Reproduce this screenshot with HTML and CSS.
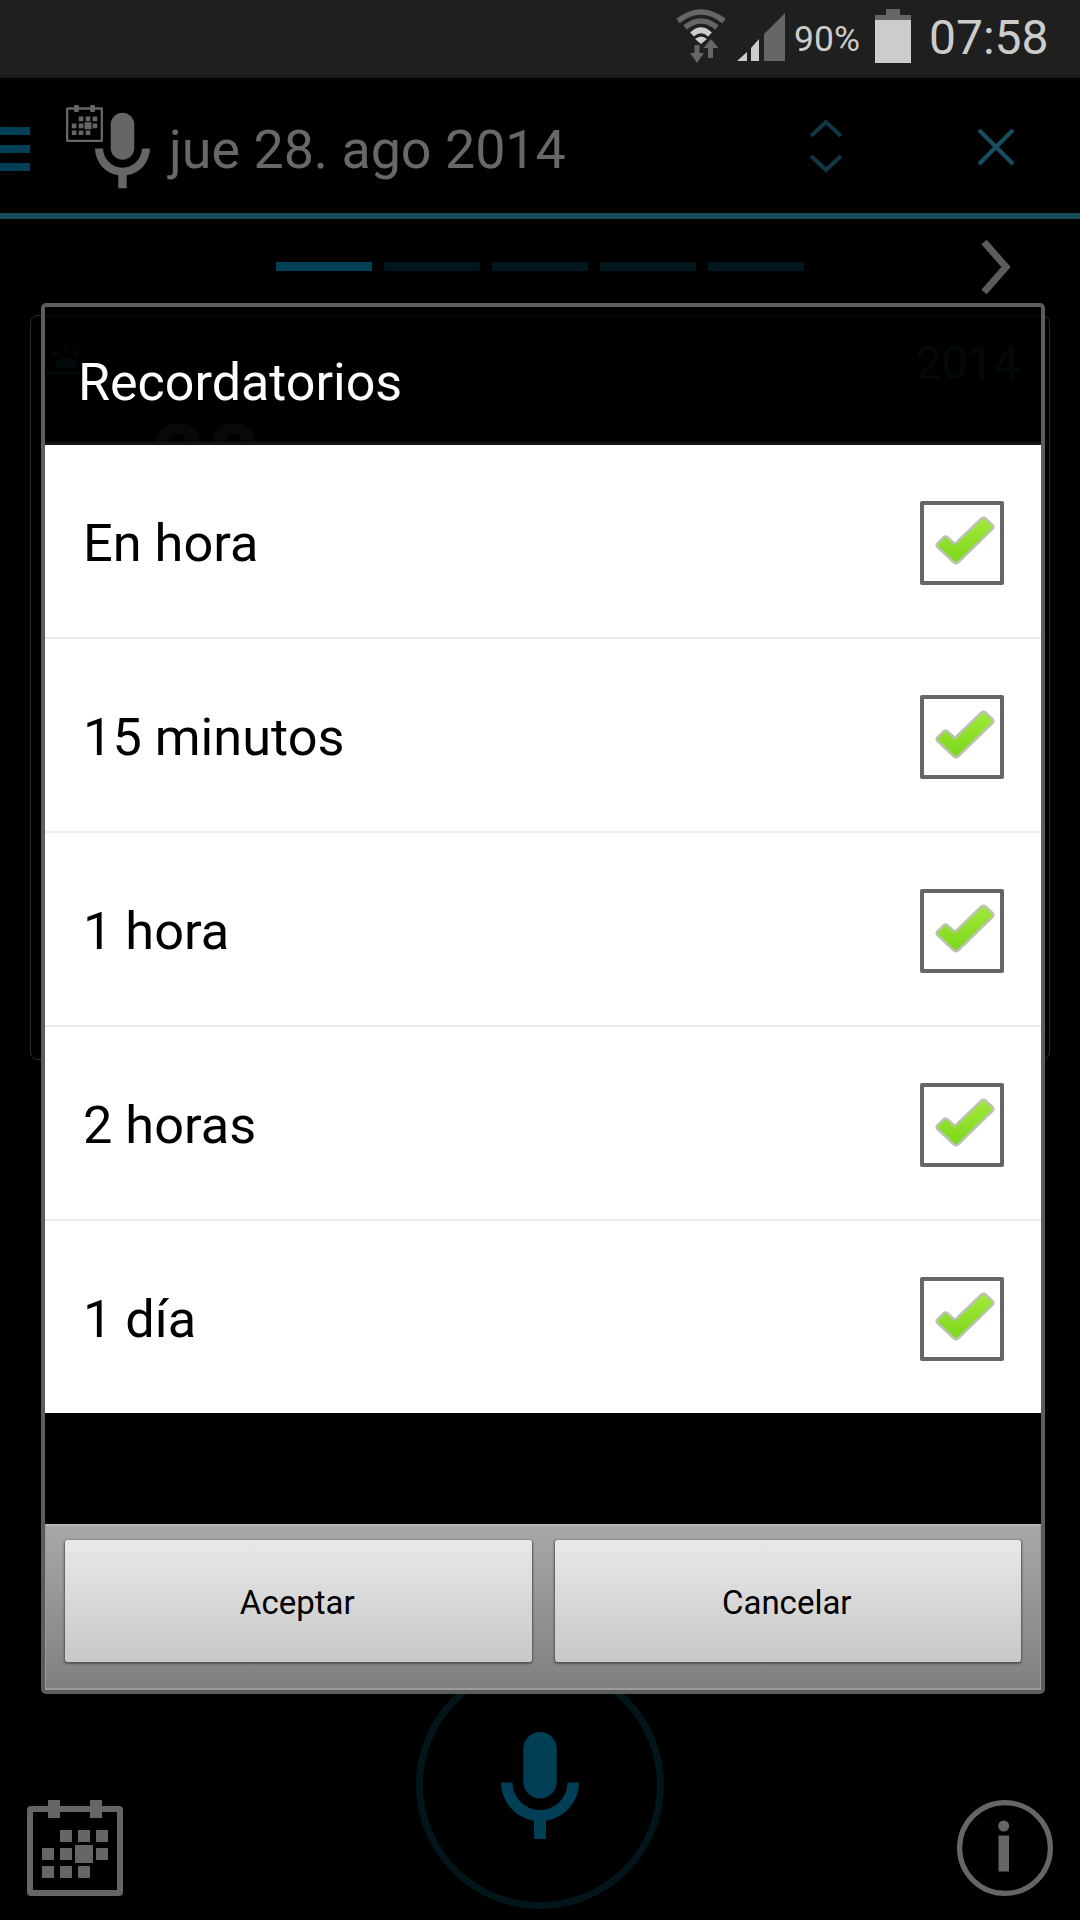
FILE: index.html
```html
<!DOCTYPE html>
<html lang="es">
<head>
    <meta charset="UTF-8">
    <meta name="viewport" content="width=device-width, initial-scale=1.0">
    <title>Recordatorios</title>
    <link rel="stylesheet" href="styles.css">
</head>
<body>
    <!-- Shared shapes -->
    <svg class="defs" width="0" height="0">
        <defs>
            <linearGradient id="check-fill" x1="0" y1="0" x2="0" y2="1">
                <stop offset="0" stop-color="#a2e83c"/>
                <stop offset="1" stop-color="#7bd818"/>
            </linearGradient>
            <symbol id="check" viewBox="0 0 76 76">
                <path d="M13 39L20 32Q21.500 31 23 32L31 39L57.500 13.500Q59.500 12 61.500 13.500L68.500 20Q70 22 68.500 24L34 57.500Q32 59 30 57.500L13 41.500Q12 40.500 13 39Z" fill="url(#check-fill)" stroke="#b9c3ae" stroke-width="2.500"/>
            </symbol>
            <symbol id="mic" viewBox="0 0 78 107">
                <rect x="22.300" y="0" width="33.400" height="66.500" rx="16.700"/>
                <path d="M0 50.500H11.500A27.500 27.500 0 0 0 66.500 50.500H78A39 39 0 0 1 45 88.700V107H33V88.700A39 39 0 0 1 0 50.500Z"/>
            </symbol>
            <symbol id="calendar" viewBox="0 0 96 96">
                <rect x="3" y="9" width="90" height="84" rx="1" fill="none" stroke="currentColor" stroke-width="6"/>
                <path d="M21 0h12v18H21zM63 0h12v18H63zM33 30h12v12H33zM51 30h12v12H51zM69 30h12v12H69zM15 48h12v12H15zM33 48h12v12H33zM48 45h18v18H48zM69 48h12v12H69zM15 66h12v12H15zM33 66h12v12H33zM51 66h12v12H51z"/>
            </symbol>
        </defs>
    </svg>

    <div class="screen">
        <div class="status-bar">
            <svg class="wifi" width="50" height="56" viewBox="0 0 50 56">
                <g fill="none" stroke-width="5.500">
                    <path d="M2 12Q25 -6 48 12" stroke="#666"/>
                    <path d="M9 18.500Q25 5.500 41 18.500" stroke="#666"/>
                    <path d="M16 25.500Q25 17 34 25.500" stroke="#ccc"/>
                </g>
                <path d="M19 30Q25 25 31 30L25 35Z" fill="#ccc"/>
                <path d="M18.500 36h5v8h4.500L21 54l-7-10h4.500zM32 49h5V39h5.500L35 30l-7.500 9H32z" fill="#666"/>
            </svg>
            <svg class="signal" width="48" height="48" viewBox="0 0 48 48">
                <path d="M0 48L10 39V48ZM14 48V35L22 26V48Z" fill="#ccc"/>
                <path d="M27 48V21L48 0V48Z" fill="#666"/>
            </svg>
            <span class="percent">90%</span>
            <svg class="battery" width="36" height="54" viewBox="0 0 36 54">
                <path d="M11 0H25V6H36V12H0V6H11Z" fill="#666"/>
                <path d="M0 11H36V54H0Z" fill="#ccc"/>
            </svg>
            <span class="clock">07:58</span>
        </div>

        <div class="app-bar">
            <div class="menu"><i></i><i></i><i></i></div>
            <div class="app-icon">
                <svg class="app-calendar"><use href="#calendar"/></svg>
                <svg class="app-mic"><use href="#mic"/></svg>
            </div>
            <h1 class="date">jue 28. ago 2014</h1>
            <svg class="sort" width="34" height="54" viewBox="0 0 34 54">
                <path d="M2 17L17 3L32 17M2 37L17 51L32 37"/>
            </svg>
            <svg class="close" width="38" height="38" viewBox="0 0 38 38">
                <path d="M2 2L36 36M36 2L2 36"/>
            </svg>
        </div>

        <div class="pager">
            <span class="page active"></span>
            <span class="page"></span>
            <span class="page"></span>
            <span class="page"></span>
            <span class="page"></span>
            <svg class="next" width="30" height="54" viewBox="0 0 30 54">
                <path d="M3 2L25 27L3 52"/>
            </svg>
        </div>

        <div class="card">
            <div class="card-top">
                <svg width="38" height="30" viewBox="0 0 38 30">
                    <path d="M0 26h38v3H0zM8 22a11 11 0 0 1 22 0zM18 0h2v6h-2zM5 6l2-2 4 4-2 2zM33 6l-2-2-4 4 2 2z"/>
                </svg>
                <span class="card-year">2014</span>
            </div>
            <div class="card-day">28</div>
        </div>

        <div class="bottom-bar">
            <svg class="calendar-button" width="96" height="96"><use href="#calendar"/></svg>
            <div class="mic-button">
                <svg width="78" height="107"><use href="#mic"/></svg>
            </div>
            <svg class="info" width="96" height="96" viewBox="0 0 96 96">
                <circle cx="48" cy="48" r="45.400" fill="none" stroke="#666" stroke-width="5.200"/>
                <circle cx="46.700" cy="26" r="5.500"/>
                <path d="M41.500 35.500h10.500v36H41.500z"/>
            </svg>
        </div>
    </div>

    <!-- Dialog -->
    <div class="dialog">
        <h2 class="dialog-title">Recordatorios</h2>
        <ul class="options">
            <li class="option">En hora<span class="checkbox"><svg><use href="#check"/></svg></span></li>
            <li class="option">15 minutos<span class="checkbox"><svg><use href="#check"/></svg></span></li>
            <li class="option">1 hora<span class="checkbox"><svg><use href="#check"/></svg></span></li>
            <li class="option">2 horas<span class="checkbox"><svg><use href="#check"/></svg></span></li>
            <li class="option">1 día<span class="checkbox"><svg><use href="#check"/></svg></span></li>
        </ul>
        <div class="dialog-buttons">
            <button class="button">Aceptar</button>
            <button class="button">Cancelar</button>
        </div>
    </div>
</body>
</html>
```

FILE: styles.css
```css
* {
    box-sizing: border-box;
}
body {
    font-family: Roboto, sans-serif;
    margin: 0;
    background-color: #000;
    color: #686868;
}
svg {
    display: block;
    flex: none;
    fill: currentColor;
}
.defs {
    position: absolute;
}
.screen {
    width: 1080px;
    height: 1920px;
    overflow: hidden;
    display: flex;
    flex-direction: column;
}

/* Status bar */
.status-bar {
    height: 78px;
    flex: none;
    display: flex;
    align-items: flex-start;
    padding: 9px 0 0 676px;
    background-color: #1f1f1f;
    border-bottom: 3px solid #191919;
    color: #ccc;
    line-height: 54px;
    white-space: nowrap;
}
.signal {
    margin: 4px 9px 0 11px;
}
.percent {
    width: 81px;
    font-size: 35.5px;
    line-height: 61px;
}
.clock {
    margin-left: 18px;
    font-size: 48px;
    line-height: 57px;
}

/* App bar */
.app-bar {
    height: 141px;
    flex: none;
    display: flex;
    align-items: flex-start;
    border-bottom: 6px solid #164a5a;
}
.menu {
    width: 30px;
    display: grid;
    gap: 10px;
    margin: 49px 36px 0 0;
}
.menu i {
    height: 8px;
    background-color: #003f55;
}
.app-icon {
    display: flex;
    width: 84px;
    margin-top: 27px;
    color: #666;
}
.app-calendar {
    width: 37px;
    height: 37px;
}
.app-mic {
    width: 55px;
    height: 77px;
    margin: 7px 0 0 -8px;
}
.date {
    width: 659px;
    margin: 40px 0 0 19px;
    font-size: 53.8px;
    font-weight: 400;
    line-height: 64px;
    color: #686868;
}
.sort {
    margin: 41px 0 0 -19px;
    fill: none;
    stroke: #103743;
    stroke-width: 4;
}
.close {
    margin: 50px 0 0 134px;
    fill: none;
    stroke: #184f62;
    stroke-width: 4;
}

/* Pager */
.pager {
    height: 96px;
    flex: none;
    display: flex;
    align-items: center;
    gap: 12px;
    padding: 0 0 1px 276px;
}
.page {
    width: 96px;
    height: 9px;
    background-color: #01151c;
}
.page.active {
    background-color: #004058;
}
.next {
    margin-left: 165px;
    fill: none;
    stroke: #5c5c5c;
    stroke-width: 7;
}

/* Day card */
.card {
    height: 745px;
    flex: none;
    width: 1020px;
    margin-left: 30px;
    padding: 19px 30px 0 16px;
    border: 1px solid #2b2b2b;
    border-radius: 8px;
}
.card-top {
    display: flex;
    justify-content: space-between;
    color: #0b2f38;
}
.card-top svg {
    margin-top: 11px;
}
.card-year {
    font-size: 46px;
    line-height: 56px;
}
.card-day {
    margin: 15px 0 0 104px;
    font-size: 96px;
    font-weight: 700;
    line-height: 108px;
    color: #2c2c2c;
}

/* Bottom bar */
.bottom-bar {
    flex: 1;
    display: flex;
    justify-content: space-between;
    align-items: flex-end;
    padding: 0 27px 11px;
    color: #666;
}
.calendar-button,
.info {
    margin-bottom: 13px;
}
.mic-button {
    width: 248px;
    height: 248px;
    display: flex;
    justify-content: center;
    padding-top: 64px;
    border: 7px solid #01151b;
    border-radius: 50%;
    color: #003f55;
}

/* Dialog lies over the day view */
.dialog {
    position: absolute;
    top: 303px;
    left: 41px;
    width: 1004px;
    height: 1391px;
    display: flex;
    flex-direction: column;
    border: 4px solid #5c5c5c;
    border-radius: 5px;
    background-color: rgba(0, 0, 0, 0.8);
}
.dialog-title {
    height: 138px;
    margin: 0;
    padding: 45px 0 0 33px;
    border-bottom: 3px solid #141414;
    font-size: 52px;
    font-weight: 400;
    line-height: 62px;
    color: #fff;
}
.options {
    margin: 0;
    padding: 0;
    list-style: none;
    background-color: #fff;
}
.option {
    height: 194px;
    display: flex;
    justify-content: space-between;
    align-items: center;
    padding: 3px 37px 0 38px;
    border-bottom: 2px solid #ebebeb;
    font-size: 52.3px;
    color: #000;
}
.option:last-child {
    height: 192px;
    border-bottom: none;
}
.checkbox {
    width: 84px;
    height: 84px;
    border: 4px solid #666;
    border-radius: 2px;
}
.checkbox svg {
    width: 76px;
    height: 76px;
}
.dialog-buttons {
    display: flex;
    align-items: flex-start;
    gap: 23px;
    height: 166px;
    margin-top: auto;
    padding: 14px 19px 0;
    border: 2px solid #999;
    border-top-color: #b8b8b8;
    border-width: 2px 1px;
    background: linear-gradient(#a8a8a8, #808080);
}
.button {
    flex: 1;
    height: 122px;
    padding: 2px 2px 0 0;
    border: none;
    border-radius: 3px;
    background: linear-gradient(#e8e8e8, #c8c8c8);
    box-shadow: 0 1px 2px 1px #555;
    font-family: inherit;
    font-size: 33px;
    color: #000;
}
```
